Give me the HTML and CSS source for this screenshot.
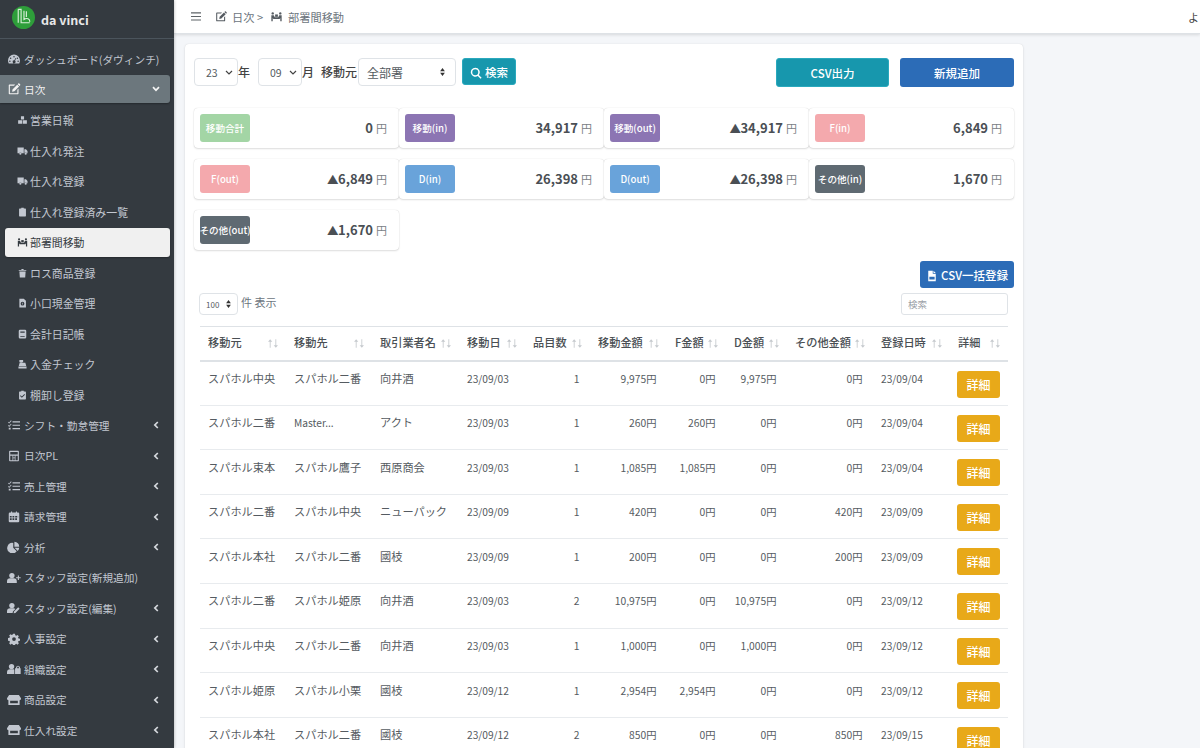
FILE: index.html
```html
<!DOCTYPE html>
<html lang="ja">
<head>
<meta charset="UTF-8">
<meta name="viewport" content="width=device-width, initial-scale=1.0">
<title>部署間移動</title>
<link rel="stylesheet" href="styles.css">
</head>
<body>
<svg class="sprite" xmlns="http://www.w3.org/2000/svg">
    <symbol id="i-gauge" viewBox="0 0 16 16"><path fill-rule="evenodd" d="M8 2a8 8 0 0 0-8 8c0 1.500.4 2.800 1 4h14c.6-1.200 1-2.500 1-4a8 8 0 0 0-8-8zM8 4a1 1 0 1 1 0 2 1 1 0 0 1 0-2zM3.500 6a1 1 0 1 1 0 2 1 1 0 0 1 0-2zM12.500 6a1 1 0 1 1 0 2 1 1 0 0 1 0-2zM2.500 10a1 1 0 1 1 0 2 1 1 0 0 1 0-2zM13.500 10a1 1 0 1 1 0 2 1 1 0 0 1 0-2zM10 6.500l.9.400-1.500 3.300a2 2 0 1 1-.9-.4z"/></symbol>
    <symbol id="i-edit" viewBox="0 0 16 16"><path d="M2 2h7.500L8 3.500H2.500v10h10V9L14 7.500V14a1 1 0 0 1-1 1H2a1 1 0 0 1-1-1V3a1 1 0 0 1 1-1z"/><path d="M6 8.500 12.300 2.200l2.500 2.500L8.500 11 5.500 11.500zM13 1.500l.7-.7a1 1 0 0 1 1.400 0l1 1a1 1 0 0 1 0 1.400l-.7.700z"/></symbol>
    <symbol id="i-boxes" viewBox="0 0 16 16"><path d="M5.500 2h5v5h-5zM1 8.500h6.500V14H1zM8.500 8.500H15V14H8.500z"/></symbol>
    <symbol id="i-truck" viewBox="0 0 16 16"><path fill-rule="evenodd" d="M0 2.500h10v9H6.500a2 2 0 0 0-3.800 0H0zM11 5h2.500L16 8v3.500h-1a2 2 0 0 0-3.800 0H11zM4.600 10.500a1.700 1.700 0 1 1 0 3.400 1.700 1.700 0 0 1 0-3.400zM13.100 10.500a1.700 1.700 0 1 1 0 3.400 1.700 1.700 0 0 1 0-3.400z"/></symbol>
    <symbol id="i-clip" viewBox="0 0 16 16"><path d="M6 1h4v1.500h2.500A1 1 0 0 1 13.500 3.500V14a1 1 0 0 1-1 1h-9a1 1 0 0 1-1-1V3.500a1 1 0 0 1 1-1H6z"/></symbol>
    <symbol id="i-carry" viewBox="0 0 16 16"><circle cx="2.500" cy="3.500" r="1.700"/><circle cx="13.500" cy="3.500" r="1.700"/><path d="M.5 6h3.500l1.500 3h5L12 6h3.500v9h-2v-5l-1 1.500h-9L2.500 10v5h-2z"/><path d="M6 5h4v3.500H6z"/></symbol>
    <symbol id="i-trash" viewBox="0 0 16 16"><path d="M2 3h4l.5-1.500h3L10 3h4v1.500H2zM3 5.500h10l-.7 9.500H3.700z"/></symbol>
    <symbol id="i-cash" viewBox="0 0 16 16"><path fill-rule="evenodd" d="M3 1h7l3.500 3.500V15H3zM8 6a3 3 0 1 0 0 6 3 3 0 0 0 0-6z"/><path d="M7.500 7.500h1v3h-1z"/></symbol>
    <symbol id="i-book" viewBox="0 0 16 16"><path fill-rule="evenodd" d="M2 3a2 2 0 0 1 2-2h8a2 2 0 0 1 2 2v10a2 2 0 0 1-2 2H4a2 2 0 0 1-2-2zM4.500 4v2h7V4zM4.500 11v1.500h7V11z"/></symbol>
    <symbol id="i-register" viewBox="0 0 16 16"><path d="M3 1.500h6V5H6.500v1h6L14 11H2l1.500-5H5V5H3zM1.500 12h13v3h-13z"/></symbol>
    <symbol id="i-check" viewBox="0 0 16 16"><path fill-rule="evenodd" d="M6 1h4v1.500h2.500a1 1 0 0 1 1 1V14a1 1 0 0 1-1 1h-9a1 1 0 0 1-1-1V3.500a1 1 0 0 1 1-1H6zM11 6.500 7 10.500 5 8.500l-1 1 3 3 5-5z"/></symbol>
    <symbol id="i-tasks" viewBox="0 0 16 16"><path d="M6 3h10v1.500H6zM6 7.500h10V9H6zM6 12h10v1.500H6z"/><path d="M.5 3.500l1 1L4 1.800l.8.700L1.500 6 0 4.300zM.5 8l1 1L4 6.300l.8.700-3.300 3.500L0 8.800zM1 11.500h2.500v2.500H1z"/></symbol>
    <symbol id="i-calc" viewBox="0 0 16 16"><path fill-rule="evenodd" d="M2.500 1h11a1 1 0 0 1 1 1v12a1 1 0 0 1-1 1h-11a1 1 0 0 1-1-1V2a1 1 0 0 1 1-1zM3 2.500V6h10V2.500zM3 7.500v6h3v-6zM7 7.500v2.500h2V7.500zM10 7.500v6h3v-6zM7 11v2.500h2V11z"/></symbol>
    <symbol id="i-cal" viewBox="0 0 16 16"><path fill-rule="evenodd" d="M4 .5h1.500V2h5V.5H12V2h1.500A1.500 1.500 0 0 1 15 3.500v10a1.500 1.500 0 0 1-1.500 1.500h-11A1.500 1.500 0 0 1 1 13.500v-10A1.500 1.500 0 0 1 2.500 2H4zM2.500 6.500v2h2.400v-2zM6 6.500v2h2.400v-2zM9.600 6.500v2H12v-2zM2.500 9.700v2.300h2.400V9.700zM6 9.700v2.300h2.400V9.700zM9.600 9.700v2.300H12V9.700zM13 6.500v2h.5v-2z"/></symbol>
    <symbol id="i-pie" viewBox="0 0 16 16"><path d="M7 2.500V9l4.600 4.600A7 7 0 1 1 7 2.500z"/><path d="M8.500 1A7 7 0 0 1 15 7.500H8.500zM8.800 9H15a7 7 0 0 1-2 4.300z"/></symbol>
    <symbol id="i-uplus" viewBox="0 0 20 16"><circle cx="7" cy="4.500" r="3.800"/><path d="M0 15v-2a4.500 4.500 0 0 1 4.500-4.500h5a4.500 4.500 0 0 1 4.500 4.500v2zM15.500 4.500h1.500v2.500h2.500v1.500H17V11h-1.500V8.500H13V7h2.500z"/></symbol>
    <symbol id="i-uedit" viewBox="0 0 20 16"><circle cx="7" cy="4.500" r="3.800"/><path d="M0 15v-2a4.500 4.500 0 0 1 4.500-4.500h5c1 0 1.800.3 2.500.8L8.500 13 8 15zM10 13l6-6 2 2-6 6-2.500.5z"/></symbol>
    <symbol id="i-cog" viewBox="0 0 16 16"><path fill-rule="evenodd" d="M6.700 1h2.600l.4 2 1.300.6 1.700-1.100 1.800 1.800-1.100 1.700.6 1.300 2 .4v2.600l-2 .4-.6 1.300 1.100 1.700-1.800 1.800-1.700-1.100-1.300.6-.4 2H6.700l-.4-2-1.300-.6-1.700 1.100-1.800-1.800 1.100-1.700-.6-1.300-2-.4V6.700l2-.4.6-1.300-1.100-1.700 1.800-1.800L5 2.600l1.300-.6zM8 5.500a2.500 2.500 0 1 0 0 5 2.500 2.500 0 0 0 0-5z"/></symbol>
    <symbol id="i-ulock" viewBox="0 0 20 16"><circle cx="6.500" cy="4.500" r="3.800"/><path d="M0 15v-2a4.500 4.500 0 0 1 4.500-4.500h4c.8 0 1.400.2 2 .5V15z"/><path fill-rule="evenodd" d="M13 7V5.500a2.800 2.800 0 0 1 5.500 0V7h1v8h-8V7zM14.500 7H17V5.500a1.200 1.200 0 0 0-2.500 0z"/></symbol>
    <symbol id="i-store" viewBox="0 0 20 16"><path fill-rule="evenodd" d="M3 1h14l3 4.500v.7a2.300 2.300 0 0 1-2 2.300V15H2V8.500a2.300 2.300 0 0 1-2-2.300v-.7zM4.500 9v3.500h11V9z"/></symbol>
    <symbol id="i-file" viewBox="0 0 16 16"><path fill-rule="evenodd" d="M3 1h6v4h4v10H3zM10 1l3 3h-3zM4.500 9v3.500h7V9z"/></symbol>
    <symbol id="i-search" viewBox="0 0 16 16"><path fill-rule="evenodd" d="M7 1a6 6 0 0 1 4.800 9.600l3.700 3.700-1.400 1.400-3.700-3.700A6 6 0 1 1 7 1zm0 2a4 4 0 1 0 0 8 4 4 0 0 0 0-8z"/></symbol>
    <symbol id="i-down" viewBox="0 0 10 10"><path d="M5 8 .5 3.500 2 2l3 3 3-3 1.500 1.500z"/></symbol>
    <symbol id="i-left" viewBox="0 0 10 10"><path d="M2 5 6.500.5 8 2 5 5l3 3-1.500 1.500z"/></symbol>
    <symbol id="i-sort" viewBox="0 0 14 10"><path d="M3.200 10V3H1.200L3.700 0l2.500 3h-2v7zM9.800 0v7h-2l2.500 3 2.500-3h-2V0z"/></symbol>
</svg>

<div class="layout">
    <aside class="sidebar">
        <div class="brand">
            <svg class="brand-logo" viewBox="0 0 24 24"><circle cx="12" cy="12" r="12" fill="#2e9e3a"/><path d="M6.500 3.500v14M6.500 3.500h3v14h9M12.500 5v9c3-2 6.500-.5 6 2.500M15 5.500v6" fill="none" stroke="#d8efd8" stroke-width="1.200"/></svg>
            <span class="brand-name">da vinci</span>
        </div>
        <nav class="menu">
            <a class="menu-item"><svg class="ico"><use href="#i-gauge"/></svg>ダッシュボード(ダヴィンチ)</a>
            <a class="menu-item open"><svg class="ico"><use href="#i-edit"/></svg>日次<svg class="caret"><use href="#i-down"/></svg></a>
            <a class="menu-item sub"><svg class="ico-s"><use href="#i-boxes"/></svg>営業日報</a>
            <a class="menu-item sub"><svg class="ico-s"><use href="#i-truck"/></svg>仕入れ発注</a>
            <a class="menu-item sub"><svg class="ico-s"><use href="#i-truck"/></svg>仕入れ登録</a>
            <a class="menu-item sub"><svg class="ico-s"><use href="#i-clip"/></svg>仕入れ登録済み一覧</a>
            <a class="menu-item sub current"><svg class="ico-s"><use href="#i-carry"/></svg>部署間移動</a>
            <a class="menu-item sub"><svg class="ico-s"><use href="#i-trash"/></svg>ロス商品登録</a>
            <a class="menu-item sub"><svg class="ico-s"><use href="#i-cash"/></svg>小口現金管理</a>
            <a class="menu-item sub"><svg class="ico-s"><use href="#i-book"/></svg>会計日記帳</a>
            <a class="menu-item sub"><svg class="ico-s"><use href="#i-register"/></svg>入金チェック</a>
            <a class="menu-item sub"><svg class="ico-s"><use href="#i-check"/></svg>棚卸し登録</a>
            <a class="menu-item"><svg class="ico"><use href="#i-tasks"/></svg>シフト・勤怠管理<svg class="caret"><use href="#i-left"/></svg></a>
            <a class="menu-item"><svg class="ico"><use href="#i-calc"/></svg>日次PL<svg class="caret"><use href="#i-left"/></svg></a>
            <a class="menu-item"><svg class="ico"><use href="#i-tasks"/></svg>売上管理<svg class="caret"><use href="#i-left"/></svg></a>
            <a class="menu-item"><svg class="ico"><use href="#i-cal"/></svg>請求管理<svg class="caret"><use href="#i-left"/></svg></a>
            <a class="menu-item"><svg class="ico"><use href="#i-pie"/></svg>分析<svg class="caret"><use href="#i-left"/></svg></a>
            <a class="menu-item"><svg class="ico"><use href="#i-uplus"/></svg>スタッフ設定(新規追加)</a>
            <a class="menu-item"><svg class="ico"><use href="#i-uedit"/></svg>スタッフ設定(編集)<svg class="caret"><use href="#i-left"/></svg></a>
            <a class="menu-item"><svg class="ico"><use href="#i-cog"/></svg>人事設定<svg class="caret"><use href="#i-left"/></svg></a>
            <a class="menu-item"><svg class="ico"><use href="#i-ulock"/></svg>組織設定<svg class="caret"><use href="#i-left"/></svg></a>
            <a class="menu-item"><svg class="ico"><use href="#i-store"/></svg>商品設定<svg class="caret"><use href="#i-left"/></svg></a>
            <a class="menu-item"><svg class="ico"><use href="#i-store"/></svg>仕入れ設定<svg class="caret"><use href="#i-left"/></svg></a>
        </nav>
    </aside>

    <div class="main">
        <header class="topbar">
            <svg class="bars" viewBox="0 0 12 10"><path d="M0 0h12v1.300H0zM0 4.300h12v1.300H0zM0 8.600h12v1.300H0z"/></svg>
            <div class="crumb">
                <svg class="crumb-ico"><use href="#i-edit"/></svg>
                <span>日次 &gt;</span>
                <svg class="crumb-ico carry"><use href="#i-carry"/></svg>
                <span>部署間移動</span>
            </div>
            <div class="user">ようこそ</div>
        </header>

        <section class="card">
            <div class="filters">
                <select class="sel sel-year"><option>23</option></select><span class="unit">年</span>
                <select class="sel sel-month"><option>09</option></select><span class="unit">月</span>
                <span class="unit from-label">移動元</span>
                <select class="sel sel-dept"><option>全部署</option></select>
                <button class="btn btn-teal btn-search"><svg class="btn-ico"><use href="#i-search"/></svg>検索</button>
                <button class="btn btn-teal btn-wide btn-push">CSV出力</button>
                <button class="btn btn-blue btn-wide">新規追加</button>
            </div>

            <div class="stats">
                <div class="stat"><span class="tag tag-green">移動合計</span><span class="amount">0<small>円</small></span></div>
                <div class="stat"><span class="tag tag-purple">移動(in)</span><span class="amount">34,917<small>円</small></span></div>
                <div class="stat"><span class="tag tag-purple">移動(out)</span><span class="amount"><span class="tri">▲</span>34,917<small>円</small></span></div>
                <div class="stat"><span class="tag tag-pink">F(in)</span><span class="amount">6,849<small>円</small></span></div>
                <div class="stat"><span class="tag tag-pink">F(out)</span><span class="amount"><span class="tri">▲</span>6,849<small>円</small></span></div>
                <div class="stat"><span class="tag tag-sky">D(in)</span><span class="amount">26,398<small>円</small></span></div>
                <div class="stat"><span class="tag tag-sky">D(out)</span><span class="amount"><span class="tri">▲</span>26,398<small>円</small></span></div>
                <div class="stat"><span class="tag tag-gray">その他(in)</span><span class="amount">1,670<small>円</small></span></div>
                <div class="stat"><span class="tag tag-gray">その他(out)</span><span class="amount"><span class="tri">▲</span>1,670<small>円</small></span></div>
            </div>

            <div class="bulk-row">
                <button class="btn btn-blue btn-bulk"><svg class="btn-ico"><use href="#i-file"/></svg>CSV一括登録</button>
            </div>

            <div class="table-tools">
                <div class="length"><select class="sel sel-length"><option>100</option></select><span>件 表示</span></div>
                <input class="table-search" type="text" placeholder="検索">
            </div>

            <table class="moves">
                <thead>
                    <tr>
                        <th class="c1">移動元<svg class="sort"><use href="#i-sort"/></svg></th>
                        <th class="c2">移動先<svg class="sort"><use href="#i-sort"/></svg></th>
                        <th class="c3">取引業者名<svg class="sort"><use href="#i-sort"/></svg></th>
                        <th class="c4">移動日<svg class="sort"><use href="#i-sort"/></svg></th>
                        <th class="c5">品目数<svg class="sort"><use href="#i-sort"/></svg></th>
                        <th class="c6">移動金額<svg class="sort"><use href="#i-sort"/></svg></th>
                        <th class="c7">F金額<svg class="sort"><use href="#i-sort"/></svg></th>
                        <th class="c8">D金額<svg class="sort"><use href="#i-sort"/></svg></th>
                        <th class="c9">その他金額<svg class="sort"><use href="#i-sort"/></svg></th>
                        <th class="c10">登録日時<svg class="sort"><use href="#i-sort"/></svg></th>
                        <th class="c11">詳細<svg class="sort"><use href="#i-sort"/></svg></th>
                    </tr>
                </thead>
                <tbody>
                    <tr><td>スパホル中央</td><td>スパホル二番</td><td>向井酒</td><td class="small">23/09/03</td><td class="num">1</td><td class="num">9,975円</td><td class="num">0円</td><td class="num">9,975円</td><td class="num">0円</td><td class="small">23/09/04</td><td class="action"><button class="btn btn-amber">詳細</button></td></tr>
                    <tr><td>スパホル二番</td><td class="small">Master...</td><td>アクト</td><td class="small">23/09/03</td><td class="num">1</td><td class="num">260円</td><td class="num">260円</td><td class="num">0円</td><td class="num">0円</td><td class="small">23/09/04</td><td class="action"><button class="btn btn-amber">詳細</button></td></tr>
                    <tr><td>スパホル束本</td><td>スパホル鷹子</td><td>西原商会</td><td class="small">23/09/03</td><td class="num">1</td><td class="num">1,085円</td><td class="num">1,085円</td><td class="num">0円</td><td class="num">0円</td><td class="small">23/09/04</td><td class="action"><button class="btn btn-amber">詳細</button></td></tr>
                    <tr><td>スパホル二番</td><td>スパホル中央</td><td>ニューパック</td><td class="small">23/09/09</td><td class="num">1</td><td class="num">420円</td><td class="num">0円</td><td class="num">0円</td><td class="num">420円</td><td class="small">23/09/09</td><td class="action"><button class="btn btn-amber">詳細</button></td></tr>
                    <tr><td>スパホル本社</td><td>スパホル二番</td><td>國枝</td><td class="small">23/09/09</td><td class="num">1</td><td class="num">200円</td><td class="num">0円</td><td class="num">0円</td><td class="num">200円</td><td class="small">23/09/09</td><td class="action"><button class="btn btn-amber">詳細</button></td></tr>
                    <tr><td>スパホル二番</td><td>スパホル姫原</td><td>向井酒</td><td class="small">23/09/03</td><td class="num">2</td><td class="num">10,975円</td><td class="num">0円</td><td class="num">10,975円</td><td class="num">0円</td><td class="small">23/09/12</td><td class="action"><button class="btn btn-amber">詳細</button></td></tr>
                    <tr><td>スパホル中央</td><td>スパホル二番</td><td>向井酒</td><td class="small">23/09/03</td><td class="num">1</td><td class="num">1,000円</td><td class="num">0円</td><td class="num">1,000円</td><td class="num">0円</td><td class="small">23/09/12</td><td class="action"><button class="btn btn-amber">詳細</button></td></tr>
                    <tr><td>スパホル姫原</td><td>スパホル小栗</td><td>國枝</td><td class="small">23/09/12</td><td class="num">1</td><td class="num">2,954円</td><td class="num">2,954円</td><td class="num">0円</td><td class="num">0円</td><td class="small">23/09/12</td><td class="action"><button class="btn btn-amber">詳細</button></td></tr>
                    <tr><td>スパホル本社</td><td>スパホル二番</td><td>國枝</td><td class="small">23/09/12</td><td class="num">2</td><td class="num">850円</td><td class="num">0円</td><td class="num">0円</td><td class="num">850円</td><td class="small">23/09/15</td><td class="action"><button class="btn btn-amber">詳細</button></td></tr>
                </tbody>
            </table>
        </section>
    </div>
</div>
</body>
</html>
```

FILE: styles.css
```css
* {
    box-sizing: border-box;
}
html, body {
    height: 100%;
}
body {
    margin: 0;
    font-family: "Noto Sans CJK JP", "Noto Sans", sans-serif;
    font-size: 11px;
    color: #555b61;
    background-color: #f4f6f9;
    overflow: hidden;
}
.sprite {
    display: none;
}
.layout {
    display: flex;
    height: 748px;
    overflow: hidden;
}

/* sidebar */
.sidebar {
    flex: 0 0 174px;
    background-color: #343a40;
    box-shadow: 0 0 3px rgba(0, 0, 0, 0.3);
    z-index: 2;
}
.brand {
    display: flex;
    align-items: center;
    height: 39px;
    padding-left: 12px;
    border-bottom: 1px solid #4b545c;
}
.brand-logo {
    width: 23px;
    height: 23px;
    margin: -4px 6px 0 0;
}
.brand-name {
    color: #e8e8e8;
    font-size: 12.5px;
    font-weight: 700;
}
.menu {
    padding-top: 4.8px;
}
.menu-item {
    display: flex;
    align-items: center;
    height: 30.52px;
    padding-left: 7px;
    margin-right: 4px;
    color: #c2c7d0;
    font-size: 10.7px;
    white-space: nowrap;
    position: relative;
}
.ico {
    width: 14px;
    height: 12px;
    margin-right: 3px;
    fill: #c2c7d0;
    flex-shrink: 0;
}
.ico-s {
    width: 11px;
    height: 10px;
    margin-right: 2px;
    fill: #c2c7d0;
    flex-shrink: 0;
}
.caret {
    position: absolute;
    right: 10px;
    top: 11px;
    width: 8px;
    height: 8px;
    fill: #d4d7dc;
}
.menu-item.open {
    background-color: #6c777d;
    color: #f0f0f0;
    height: 28px;
    margin-top: 1px;
    margin-bottom: 1.52px;
    border-radius: 0 3px 3px 0;
    box-shadow: 0 1px 2px rgba(0, 0, 0, 0.3);
}
.menu-item.open .ico,
.menu-item.open .caret {
    fill: #f4f4f4;
}
.menu-item.open .caret {
    top: 10px;
}
.menu-item.sub {
    padding-left: 17px;
    font-size: 10.9px;
}
.menu-item.current {
    background-color: #f0f0f0;
    color: #343a40;
    height: 29px;
    margin: 1px 4px 0.52px 5px;
    padding-left: 12px;
    border-radius: 3px;
    box-shadow: 0 1px 2px rgba(0, 0, 0, 0.3);
}
.menu-item.current .ico-s {
    fill: #343a40;
}

/* top bar */
.main {
    flex: 1;
    min-width: 0;
}
.topbar {
    display: flex;
    align-items: center;
    height: 34px;
    background-color: #fff;
    border-bottom: 1px solid #dee2e6;
    box-shadow: 0 1px 3px rgba(0, 0, 0, 0.12);
    padding-left: 17px;
    overflow: hidden;
}
.bars {
    width: 10px;
    height: 9px;
    fill: #5f6468;
    flex-shrink: 0;
    margin-right: 14px;
}
.crumb {
    display: flex;
    align-items: center;
    flex: 0 0 973px;
    font-size: 11.2px;
    color: #6c757d;
}
.crumb-ico {
    width: 12px;
    height: 11px;
    fill: #555b61;
    margin-right: 5px;
}
.crumb-ico.carry {
    width: 13px;
    margin-left: 7px;
}
.user {
    flex-shrink: 0;
    color: #444;
    font-size: 11px;
    white-space: nowrap;
}

/* card */
.card {
    width: 838px;
    height: 760px;
    margin: 10px 0 0 11px;
    padding: 14px 9px 0 9px;
    background-color: #fff;
    border-radius: 4px;
    box-shadow: 0 0 1px rgba(0, 0, 0, 0.13), 0 1px 3px rgba(0, 0, 0, 0.1);
}
.filters {
    display: flex;
    align-items: flex-start;
    height: 49.5px;
}
.unit {
    font-size: 12px;
    font-weight: 500;
    line-height: 28px;
    color: #444;
}
.from-label {
    margin: 0 1px 0 7px;
}
.sel {
    appearance: none;
    font-family: inherit;
    color: #555b61;
    background-color: #fff;
    border: 1px solid #dfe3e7;
    border-radius: 4px;
    background-repeat: no-repeat;
    outline: none;
}
.sel-year, .sel-month {
    width: 44px;
    height: 28px;
    font-size: 10.5px;
    padding-left: 11px;
    background-image: url("data:image/svg+xml,%3Csvg xmlns='http://www.w3.org/2000/svg' viewBox='0 0 8 5'%3E%3Cpath d='M1 1l3 3 3-3' fill='none' stroke='%23444' stroke-width='1.200'/%3E%3C/svg%3E");
    background-size: 8px 5px;
    background-position: right 4px center;
}
.sel-month {
    margin-left: 8px;
}
.sel-dept, .sel-length {
    background-image: url("data:image/svg+xml,%3Csvg xmlns='http://www.w3.org/2000/svg' viewBox='0 0 6 10'%3E%3Cpath d='M3 0l3 4H0zM3 10l3-4H0z' fill='%23333'/%3E%3C/svg%3E");
    background-size: 5px 8px;
}
.sel-dept {
    width: 98px;
    height: 28px;
    font-size: 12px;
    padding-left: 8px;
    background-position: right 10px center;
}
.btn {
    font-family: inherit;
    border: 1px solid transparent;
    border-radius: 3px;
    color: #fff;
    font-weight: 500;
    padding: 0;
}
.btn-ico {
    width: 12px;
    height: 12px;
    fill: #fff;
    margin-right: 3px;
    vertical-align: -2px;
}
.btn-teal {
    background-color: #1797ad;
    border-color: #2aa9bd;
}
.btn-blue {
    background-color: #2c6cb7;
}
.btn-amber {
    width: 43px;
    height: 27px;
    font-size: 12px;
    background-color: #e8a919;
}
.btn-search {
    width: 54px;
    height: 27px;
    margin-left: 6px;
    font-size: 11.5px;
}
.btn-wide {
    width: 114px;
    height: 29px;
    font-size: 11.5px;
}
.btn-push {
    width: 113px;
    margin-left: auto;
    margin-right: 11px;
}

/* totals */
.stats {
    display: grid;
    grid-template-columns: repeat(4, 205px);
    grid-auto-rows: 40.5px;
    row-gap: 10.5px;
    height: 142.5px;
}
.stat {
    display: flex;
    align-items: center;
    justify-content: space-between;
    padding: 0 12px 0 6px;
    background-color: #fff;
    border-radius: 4px;
    box-shadow: 0 0 1px rgba(0, 0, 0, 0.2), 0 1px 2px rgba(0, 0, 0, 0.12);
}
.tag {
    display: flex;
    align-items: center;
    justify-content: center;
    width: 50px;
    height: 28px;
    border-radius: 3px;
    color: #fff;
    font-size: 9.6px;
    font-weight: 500;
    white-space: nowrap;
}
.tag-green { background-color: #a3d5a5; }
.tag-purple { background-color: #8c75b3; }
.tag-pink { background-color: #f4a9ad; }
.tag-sky { background-color: #69a3da; }
.tag-gray { background-color: #5f6a72; }
.amount {
    font-size: 13px;
    font-weight: 700;
    color: #4a4f54;
}
.tri {
    font-size: 11.5px;
    letter-spacing: -1.5px;
    margin-right: 1px;
}
.amount small {
    font-size: 11px;
    font-weight: 400;
    color: #7a8086;
    margin-left: 3px;
}
.bulk-row {
    display: flex;
    justify-content: flex-end;
    height: 32px;
    margin-top: 11px;
}
.btn-bulk {
    width: 94px;
    height: 27px;
    font-size: 11.5px;
}
.table-tools {
    display: flex;
    justify-content: space-between;
    align-items: flex-start;
    height: 32.5px;
    padding: 0 6px 0 5px;
}
.length {
    display: flex;
    gap: 3px;
    line-height: 19px;
    font-size: 11px;
    color: #6c757d;
}
.sel-length {
    width: 39px;
    height: 22px;
    font-size: 8px;
    padding-left: 6px;
    background-position: right 6px center;
}
.table-search {
    width: 107px;
    height: 22px;
    border: 1px solid #dfe3e7;
    border-radius: 3px;
    font-family: inherit;
    font-size: 9.5px;
    padding: 0 6px;
}
.table-search::placeholder {
    color: #9aa0a6;
}

/* table */
.moves {
    width: 808px;
    margin-left: 6px;
    table-layout: fixed;
    border-collapse: collapse;
}
.moves th {
    position: relative;
    height: 34.5px;
    padding: 0 0 2px 8px;
    text-align: left;
    font-size: 11.2px;
    font-weight: 500;
    color: #4a4f54;
    border-top: 1px solid #dee2e6;
    border-bottom: 2px solid #dee2e6;
    white-space: nowrap;
}
.sort {
    position: absolute;
    right: 7px;
    top: 12px;
    width: 12px;
    height: 9px;
    fill: #c6cace;
}
.moves td {
    height: 44.6px;
    padding: 8.5px 8px 0;
    font-size: 11.2px;
    color: #555b61;
    border-bottom: 1px solid #e8ebee;
    white-space: nowrap;
    vertical-align: top;
}
.moves td.action {
    padding: 9px 0 0 7px;
}
.moves td.small {
    font-size: 10.2px;
    padding-top: 9.5px;
}
.moves td.num {
    text-align: right;
    font-size: 10.3px;
    padding: 9.5px 10.5px 0 0;
}
.c1 { width: 86px; }
.c2 { width: 86px; }
.c3 { width: 87px; }
.c4 { width: 66px; }
.c5 { width: 65px; }
.c6 { width: 77px; }
.c7 { width: 59px; }
.c8 { width: 61px; }
.c9 { width: 86px; }
.c10 { width: 77px; }
.c11 { width: 58px; }
```
